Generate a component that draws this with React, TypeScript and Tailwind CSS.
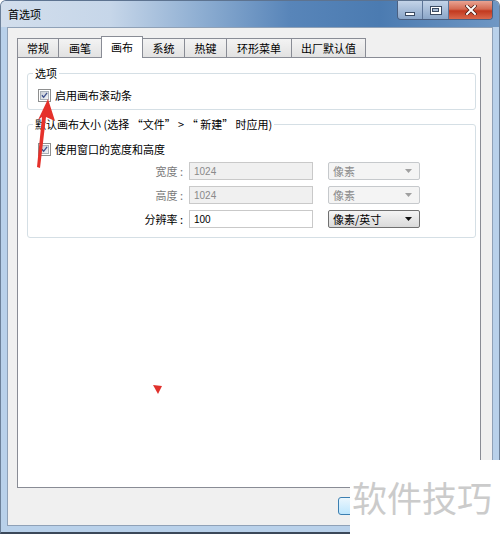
import * as React from "react";

const tabs = [
  { label: "常规", w: "w-[42px]" },
  { label: "画笔", w: "w-[44px]" },
  { label: "画布", w: "w-[42px]", active: true },
  { label: "系统", w: "w-[43px]" },
  { label: "热键", w: "w-[43px]" },
  { label: "环形菜单", w: "w-[66px]" },
  { label: "出厂默认值", w: "w-[75px]" },
];

const CheckBox = () => (
  <span className="flex h-[13px] w-[13px] shrink-0 items-center justify-center border border-[#8e8f8f] bg-white">
    <span className="flex h-[9px] w-[9px] items-center justify-center border border-[#a9b0b8] bg-gradient-to-br from-[#c9ced6] to-[#f3f4f6]">
      <svg width="9" height="9" viewBox="0 0 9 9">
        <path d="M1.2 4.2 L3.4 6.8 L7.8 1" fill="none" stroke="#3d4f8c" strokeWidth="1.7" />
      </svg>
    </span>
  </span>
);

const Arrow = ({ color }: { color: string }) => (
  <svg width="7" height="4" viewBox="0 0 7 4">
    <path d="M0 0 H7 L3.5 4 Z" fill={color} />
  </svg>
);

const Field = ({ value, disabled }: { value: string; disabled?: boolean }) => (
  <div
    className={
      disabled
        ? "flex h-[18px] w-[124px] items-center border border-[#c9c9c9] bg-[#f0f0f0] pl-[4px] font-['Liberation_Sans',sans-serif] text-[10px] text-[#8a8a8a]"
        : "flex h-[18px] w-[124px] items-center border border-[#c9c9c9] bg-white pl-[4px] font-['Liberation_Sans',sans-serif] text-[10px] text-black"
    }
  >
    {value}
  </div>
);

const Select = ({ value, disabled }: { value: string; disabled?: boolean }) => (
  <div
    className={
      disabled
        ? "flex h-[18px] w-[92px] items-center justify-between rounded-[2px] border border-[#c6c9cc] bg-[#f4f4f4] pl-[4px] pr-[7px] text-[#8a8a8a]"
        : "flex h-[18px] w-[92px] items-center justify-between rounded-[2px] border border-[#707070] bg-gradient-to-b from-[#f4f4f4] to-[#dadada] pl-[4px] pr-[7px] text-black"
    }
  >
    <span className="leading-[14px]">{value}</span>
    <Arrow color={disabled ? "#a0a0a0" : "#111111"} />
  </div>
);

const Row = ({ label, value, unit, disabled }: { label: string; value: string; unit: string; disabled?: boolean }) => (
  <div className="flex items-center">
    <span className={disabled ? "w-[145px] text-right text-[#7a7a7a]" : "w-[145px] text-right text-black"}>{label}</span>
    <span className="ml-[6px]">
      <Field value={value} disabled={disabled} />
    </span>
    <span className="ml-[15px]">
      <Select value={unit} disabled={disabled} />
    </span>
  </div>
);

export default function App() {
  return (
    <div className="relative h-[534px] w-[500px] overflow-hidden bg-white font-['Noto_Sans_CJK_SC',sans-serif] text-[11px] text-black">
      <div className="flex h-[534px] flex-col rounded-t-[6px] border-x border-b-2 border-t border-x-[#6d8199] border-b-[#3b4859] border-t-[#5d7390] bg-[#b9d1ea]">
        {/* title bar */}
        <div className="flex h-[26px] items-start justify-between rounded-t-[5px] bg-[linear-gradient(90deg,#d2deec_0%,#c6d6e9_22%,#8eaed2_40%,#5885b9_58%,#4b7bb1_76%,#6f97c4_100%)]">
          <span className="pl-[7px] pt-[5px] leading-[16px]">首选项</span>
          <div className="mr-[6px] flex h-[19px] overflow-hidden rounded-b-[4px] border border-t-0 border-[#4a5f80]">
            <div className="flex w-[25px] items-center justify-center border-r border-[#5d7598] bg-gradient-to-b from-[#c3d3e8] to-[#8ba6c8]">
              <span className="mt-[7px] h-[4px] w-[10px] border border-[#3b4b62] bg-white" />
            </div>
            <div className="flex w-[26px] items-center justify-center border-r border-[#5d7598] bg-gradient-to-b from-[#c3d3e8] to-[#8ba6c8]">
              <span className="flex h-[9px] w-[12px] items-center justify-center border border-[#3b4b62] bg-white">
                <span className="h-[4px] w-[7px] border border-[#3b4b62] bg-[#a8bcd6]" />
              </span>
            </div>
            <div className="flex w-[43px] items-center justify-center bg-[linear-gradient(180deg,#e9a392_0%,#d46a52_45%,#c2391f_55%,#d9684c_100%)]">
              <svg width="12" height="10" viewBox="0 0 12 10">
                <path d="M2 1 L10 9 M10 1 L2 9" stroke="#4a1a12" strokeWidth="3.4" strokeLinecap="square" />
                <path d="M2 1 L10 9 M10 1 L2 9" stroke="#ffffff" strokeWidth="2" strokeLinecap="square" />
              </svg>
            </div>
          </div>
        </div>

        {/* body */}
        <div className="flex flex-1 flex-col px-[6px] pb-[6px]">
          <div className="flex flex-1 flex-col border border-[#8fa1b7] bg-[#f0f0f0] pl-[9px] pr-[11px] pt-[8px] pb-[10px]">
            {/* tabs */}
            <div className="relative z-10 flex h-[21px] items-end pl-[1px]">
              {tabs.map((t) =>
                t.active ? (
                  <div
                    key={t.label}
                    className={`${t.w} -mb-px -ml-px flex h-[22px] items-center justify-center border border-b-0 border-[#898c95] bg-white pb-[1px]`}
                  >
                    {t.label}
                  </div>
                ) : (
                  <div
                    key={t.label}
                    className={`${t.w} -ml-px flex h-[19px] items-center justify-center border border-b-0 border-[#898c95] bg-gradient-to-b from-[#f3f3f3] to-[#e2e2e2]`}
                  >
                    {t.label}
                  </div>
                )
              )}
            </div>

            {/* tab panel */}
            <div className="flex flex-1 flex-col border border-[#898c95] bg-white pl-[9px] pr-[4px] pt-[8px]">
              <fieldset className="rounded-[3px] border border-[#d5dfe5]">
                <legend className="ml-[5px] px-[2px] leading-[14px]">选项</legend>
                <div className="mb-[7px] mt-[8px] flex h-[14px] items-center gap-[4px] pl-[10px]">
                  <CheckBox />
                  <span className="leading-[14px]">启用画布滚动条</span>
                </div>
              </fieldset>

              <fieldset className="mt-[7px] rounded-[3px] border border-[#d5dfe5]">
                <legend className="ml-[5px] px-[2px] leading-[14px]">默认画布大小 (选择 “文件” &gt; “&nbsp;新建” 时应用)</legend>
                <div className="flex flex-col gap-[6px] pb-[9px] pl-[10px] pt-[11px]">
                  <div className="flex h-[14px] items-center gap-[4px]">
                    <CheckBox />
                    <span className="leading-[14px]">使用窗口的宽度和高度</span>
                  </div>
                  <Row label="宽度 :" value="1024" unit="像素" disabled />
                  <Row label="高度 :" value="1024" unit="像素" disabled />
                  <Row label="分辨率 :" value="100" unit="像素/英寸" />
                </div>
              </fieldset>
            </div>

            {/* buttons (mostly hidden under the watermark) */}
            <div className="mt-[9px] flex justify-end gap-[6px]">
              <div className="h-[18px] w-[73px] rounded-[3px] border border-[#3c7fb1] bg-gradient-to-b from-[#eaf6fd] to-[#bee6fd]" />
              <div className="h-[18px] w-[64px] rounded-[3px] border border-[#707070] bg-gradient-to-b from-[#f2f2f2] to-[#dddddd]" />
            </div>
          </div>
        </div>
      </div>

      {/* annotation arrow */}
      <svg className="absolute left-0 top-0" width="70" height="180" viewBox="0 0 70 180">
        <path d="M48 99 L55 121 L46 117 L40 168 L37 167 L42 117 L38 120 Z" fill="#e5312b" />
      </svg>
      <svg className="absolute left-[152px] top-[384px]" width="12" height="11" viewBox="0 0 12 11">
        <path d="M1 1 L10 2 L6 10 Z" fill="#e0312c" />
      </svg>

      {/* watermark */}
      <div className="absolute left-[350px] top-[460px] h-[74px] w-[150px] bg-white pl-[2px] pt-[19px]">
        <span className="text-[35px] leading-[35px] text-[#cbcbcb]">软件技巧</span>
      </div>
    </div>
  );
}
